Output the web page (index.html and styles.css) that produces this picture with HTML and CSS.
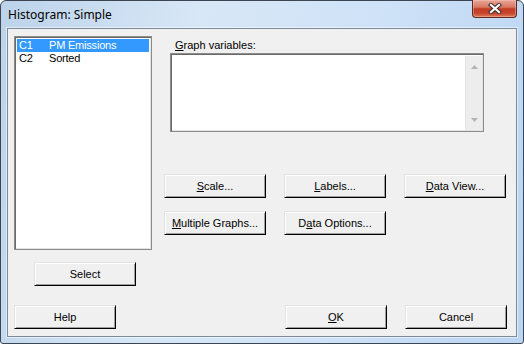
FILE: index.html
```html
<!DOCTYPE html>
<html lang="en">
<head>
    <meta charset="UTF-8">
    <title>Histogram: Simple</title>
    <link rel="stylesheet" href="styles.css">
</head>
<body>
    <div class="window">
        <!-- Title bar -->
        <div class="titlebar">
            <span class="title">Histogram: Simple</span>
            <div class="close-btn">
                <svg width="14" height="11" viewBox="0 0 14 11">
                    <path d="M3 2L11 9M11 2L3 9" stroke="#3a3030" stroke-width="4.2" stroke-linecap="square"/>
                    <path d="M3 2L11 9M11 2L3 9" stroke="#ffffff" stroke-width="2.2" stroke-linecap="square"/>
                </svg>
            </div>
        </div>

        <!-- Dialog body -->
        <div class="client">
            <div class="main">
                <div class="left-col">
                    <div class="listbox">
                        <div class="list-row selected"><span class="col-id">C1</span><span>PM Emissions</span></div>
                        <div class="list-row"><span class="col-id">C2</span><span>Sorted</span></div>
                    </div>
                    <div class="btn select-btn">Select</div>
                </div>

                <div class="right-col">
                    <div class="field-label"><u>G</u>raph variables:</div>
                    <div class="textbox">
                        <div class="text-area"></div>
                        <div class="scrollbar">
                            <svg width="7" height="4" viewBox="0 0 7 4"><polygon points="3.5,0 7,4 0,4" fill="#b4b4b4"/></svg>
                            <svg width="7" height="4" viewBox="0 0 7 4"><polygon points="0,0 7,0 3.5,4" fill="#b4b4b4"/></svg>
                        </div>
                    </div>
                    <div class="btn-grid">
                        <div class="btn"><u>S</u>cale...</div>
                        <div class="btn"><u>L</u>abels...</div>
                        <div class="btn"><u>D</u>ata View...</div>
                        <div class="btn"><u>M</u>ultiple Graphs...</div>
                        <div class="btn">D<u>a</u>ta Options...</div>
                    </div>
                </div>
            </div>

            <div class="footer">
                <div class="btn">Help</div>
                <div class="footer-right">
                    <div class="btn"><u>O</u>K</div>
                    <div class="btn">Cancel</div>
                </div>
            </div>
        </div>
    </div>
</body>
</html>
```

FILE: styles.css
```css
* {
    margin: 0;
    padding: 0;
    box-sizing: border-box;
}

body {
    width: 524px;
    height: 344px;
    overflow: hidden;
    font-family: 'Liberation Sans', Arial, sans-serif;
    font-size: 11px;
    color: #000;
}

/* Window frame */
.window {
    width: 524px;
    height: 344px;
    display: flex;
    flex-direction: column;
    border: 1px solid #3c4652;
    border-radius: 6px 6px 3px 3px;
    background: linear-gradient(100deg, #bcd3ea 0%, #d8e7f6 35%, #cfe2f7 65%, #bad5f2 100%);
    padding: 0 6px 6px 6px;
}

.titlebar {
    height: 27px;
    display: flex;
    justify-content: space-between;
    align-items: flex-start;
}

.title {
    font-family: 'Noto Sans', sans-serif;
    font-size: 12px;
    line-height: 16px;
    margin-top: 6px;
    padding-left: 1px;
    color: #000;
}

.close-btn {
    width: 45px;
    height: 18px;
    margin-top: -1px;
    display: flex;
    justify-content: center;
    align-items: center;
    border: 1px solid #5e2a22;
    border-top: none;
    border-radius: 0 0 4px 4px;
    background: linear-gradient(#e9a597 0%, #d87862 42%, #c13e25 52%, #c6452c 78%, #e07a5b 100%);
    box-shadow: inset 0 0 0 1px rgba(255, 220, 210, 0.35);
}

/* Client area */
.client {
    flex: 1;
    background: #f0f0f0;
    border: 1px solid #7d8a97;
    box-shadow: 0 0 0 1px rgba(255, 255, 255, 0.5);
    padding: 7px 9px 7px 6px;
}

.main {
    display: flex;
}

.left-col {
    width: 138px;
    display: flex;
    flex-direction: column;
}

.listbox {
    height: 214px;
    background: #fff;
    border: 1px solid #8c8c8c;
    box-shadow: inset 1px 1px #696969, inset -1px -1px #e3e3e3;
    padding: 2px;
}

.list-row {
    height: 13px;
    line-height: 13px;
    padding-left: 2px;
    display: flex;
    letter-spacing: -0.2px;
}

.list-row.selected {
    background: #3399ff;
    color: #fff;
}

.col-id {
    width: 30px;
}

.select-btn {
    margin-top: 12px;
    margin-left: 20px;
}

.right-col {
    margin-left: 12px;
    display: flex;
    flex-direction: column;
}

.field-label {
    line-height: 13px;
    margin-top: 3px;
    padding-left: 11px;
}

.textbox {
    width: 314px;
    height: 79px;
    margin-top: 1px;
    margin-left: 6px;
    display: flex;
    background: #fff;
    border: 1px solid #8c8c8c;
    box-shadow: inset 1px 1px #696969, inset -1px -1px #e3e3e3;
    padding: 2px 1px 1px 2px;
}

.text-area {
    flex: 1;
}

.scrollbar {
    width: 17px;
    background: #ededed;
    border-left: 1px solid #e4e4e4;
    display: flex;
    flex-direction: column;
    justify-content: space-between;
    align-items: center;
    padding: 9px 0 8px 0;
}

.scrollbar svg {
    display: block;
}

/* Buttons */
.btn {
    width: 102px;
    height: 24px;
    display: flex;
    justify-content: center;
    align-items: center;
    background: #f0f0f0;
    border: 1px solid;
    border-color: #e3e3e3 #000 #000 #e3e3e3;
    box-shadow: inset 1px 1px #fff, inset -1px -1px #a0a0a0;
    padding-bottom: 1px;
}

.btn-grid {
    display: grid;
    grid-template-columns: repeat(3, 102px);
    column-gap: 18px;
    row-gap: 13px;
    margin-top: 42px;
}

.footer {
    display: flex;
    justify-content: space-between;
    margin-top: 19px;
}

.footer-right {
    display: flex;
    gap: 18px;
}
```
